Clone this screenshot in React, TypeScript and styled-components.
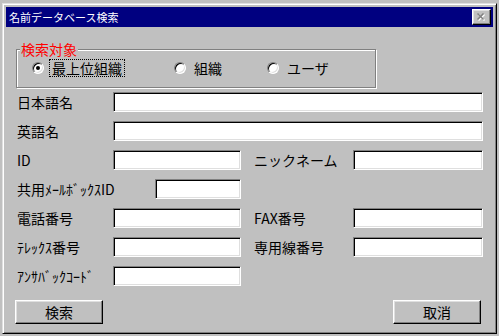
import styled, { createGlobalStyle } from "styled-components";

const GlobalStyle = createGlobalStyle`
  html, body {
    margin: 0;
    padding: 0;
    background: #c0c0c0;
  }
  body {
    font-family: "Noto Sans CJK JP", "Noto Sans", sans-serif;
    font-size: 14px;
    color: #000;
  }
`;

const Window = styled.div`
  box-sizing: border-box;
  margin: 3px 0 0 2px;
  width: 495px;
  height: 331px;
  background: #c0c0c0;
  border: 1px solid;
  border-color: #dfdfdf #000 #000 #dfdfdf;
  box-shadow: inset 1px 1px 0 #fff, inset -1px -1px 0 #808080;
  padding: 3px;
  display: flex;
  flex-direction: column;
`;

const TitleBar = styled.div`
  height: 20px;
  flex: none;
  background: #000080;
  color: #fff;
  display: flex;
  align-items: center;
  justify-content: space-between;
  padding: 0 2px 0 3px;
`;

const Title = styled.span`
  font-size: 11px;
  line-height: 20px;
`;

const CloseButton = styled.button`
  box-sizing: border-box;
  width: 19px;
  height: 16px;
  padding: 0;
  background: #c0c0c0;
  border: 1px solid;
  border-color: #fff #000 #000 #fff;
  box-shadow: inset -1px -1px 0 #808080, inset 1px 1px 0 #dfdfdf;
  display: flex;
  align-items: center;
  justify-content: center;
`;

const Body = styled.div`
  display: flex;
  flex-direction: column;
  padding: 14px 9px 0 11px;
`;

const GroupBox = styled.fieldset`
  box-sizing: border-box;
  width: 360px;
  margin: 0 0 0 -1px;
  padding: 0;
  border: 1px solid #808080;
  box-shadow: 1px 1px 0 #fff, inset 1px 1px 0 #fff;
`;

const Legend = styled.legend`
  color: #ff0000;
  font-size: 14px;
  line-height: 16px;
  padding: 0 1px;
  margin-left: 3px;
  background: #c0c0c0;
`;

const RadioRow = styled.div`
  display: flex;
  align-items: center;
  height: 18px;
  margin: 2px 0 10px;
  padding-left: 15px;
`;

const RadioItem = styled.label<{ $width?: number }>`
  display: flex;
  align-items: center;
  gap: 5px;
  width: ${(p) => (p.$width ? `${p.$width}px` : "auto")};
  flex: none;
  line-height: 16px;
`;

const RadioCircle = styled.span<{ $checked?: boolean }>`
  box-sizing: border-box;
  position: relative;
  width: 12px;
  height: 12px;
  border-radius: 50%;
  background: #fff;
  border: 1px solid;
  border-color: #808080 #fff #fff #808080;
  box-shadow: inset 1px 1px 0 #000, inset -1px -1px 0 #dfdfdf;
  &::after {
    content: "";
    display: ${(p) => (p.$checked ? "block" : "none")};
    position: absolute;
    left: 3px;
    top: 3px;
    width: 4px;
    height: 4px;
    border-radius: 50%;
    background: #000;
  }
`;

const RadioText = styled.span<{ $focused?: boolean }>`
  padding: 0 2px;
  border: 1px dotted ${(p) => (p.$focused ? "#000" : "transparent")};
`;

const Form = styled.div`
  display: grid;
  grid-template-columns: 96px 141px 99px 130px;
  grid-auto-rows: 20px;
  row-gap: 9px;
  margin-top: 4px;
`;

const Label = styled.span<{ $col?: number }>`
  grid-column: ${(p) => p.$col ?? 1};
  line-height: 20px;
  white-space: nowrap;
`;

const Field = styled.input<{ $span?: boolean; $width?: number; $offset?: number; $col?: number }>`
  box-sizing: border-box;
  grid-column: ${(p) => (p.$span ? "2 / -1" : p.$col ?? 2)};
  width: ${(p) => (p.$span ? "100%" : `${p.$width ?? 128}px`)};
  margin-left: ${(p) => p.$offset ?? 0}px;
  height: 20px;
  padding: 0 3px;
  background: #fff;
  border: 1px solid;
  border-color: #808080 #fff #fff #808080;
  box-shadow: inset 1px 1px 0 #000, inset -1px -1px 0 #dfdfdf;
  font: inherit;
  outline: none;
`;

const ButtonRow = styled.div`
  display: flex;
  justify-content: space-between;
  margin: 14px 3px 0 -2px;
`;

const Button = styled.button`
  box-sizing: border-box;
  width: 88px;
  height: 24px;
  padding: 0;
  background: #c0c0c0;
  border: 1px solid;
  border-color: #fff #000 #000 #fff;
  box-shadow: inset -1px -1px 0 #808080, inset 1px 1px 0 #dfdfdf;
  font-family: inherit;
  font-size: 14px;
  color: #000;
`;

function CloseGlyph() {
  return (
    <svg width="9" height="8" viewBox="0 0 9 8">
      <path d="M1.5 1.5 L7.5 7.5 M7.5 1.5 L1.5 7.5" stroke="#fff" strokeWidth="1.5" />
      <path d="M0.5 0.5 L6.5 6.5 M6.5 0.5 L0.5 6.5" stroke="#808080" strokeWidth="1.5" />
    </svg>
  );
}

function App() {
  return (
    <>
      <GlobalStyle />
      <Window>
        <TitleBar>
          <Title>名前データベース検索</Title>
          <CloseButton>
            <CloseGlyph />
          </CloseButton>
        </TitleBar>
        <Body>
          <GroupBox>
            <Legend>検索対象</Legend>
            <RadioRow>
              <RadioItem $width={142}>
                <RadioCircle $checked />
                <RadioText $focused>最上位組織</RadioText>
              </RadioItem>
              <RadioItem $width={93}>
                <RadioCircle />
                <RadioText>組織</RadioText>
              </RadioItem>
              <RadioItem>
                <RadioCircle />
                <RadioText>ユーザ</RadioText>
              </RadioItem>
            </RadioRow>
          </GroupBox>
          <Form>
            <Label>日本語名</Label>
            <Field $span />
            <Label>英語名</Label>
            <Field $span />
            <Label>ID</Label>
            <Field />
            <Label $col={3}>ニックネーム</Label>
            <Field $col={4} $width={130} />
            <Label>共用ﾒｰﾙﾎﾞｯｸｽID</Label>
            <Field $width={86} $offset={42} />
            <Label>電話番号</Label>
            <Field />
            <Label $col={3}>FAX番号</Label>
            <Field $col={4} $width={130} />
            <Label>ﾃﾚｯｸｽ番号</Label>
            <Field />
            <Label $col={3}>専用線番号</Label>
            <Field $col={4} $width={130} />
            <Label>ｱﾝｻﾊﾞｯｸｺｰﾄﾞ</Label>
            <Field />
          </Form>
          <ButtonRow>
            <Button>検索</Button>
            <Button>取消</Button>
          </ButtonRow>
        </Body>
      </Window>
    </>
  );
}

export default App;
